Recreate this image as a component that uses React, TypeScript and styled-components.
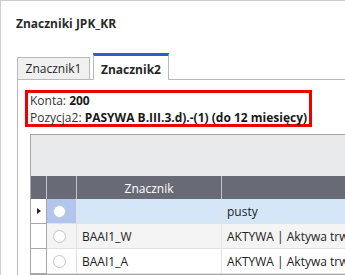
import React from 'react';
import styled, { createGlobalStyle } from 'styled-components';

const GlobalStyle = createGlobalStyle`
  html, body {
    margin: 0;
    padding: 0;
    background: #ffffff;
  }
  body {
    font-family: 'Open Sans', 'Noto Sans', 'DejaVu Sans', sans-serif;
    font-size: 12px;
    color: #1f1f1f;
  }
`;

type Row = {
  id: string;
  code: string;
  description: string;
  selected?: boolean;
  alt?: boolean;
};

const rows: Row[] = [
  { id: 'empty', code: '', description: 'pusty', selected: true },
  { id: 'w', code: 'BAAI1_W', description: 'AKTYWA | Aktywa trwałe | Wartości niematerialne i prawne', alt: true },
  { id: 'a', code: 'BAAI1_A', description: 'AKTYWA | Aktywa trwałe | Wartości niematerialne i prawne' },
];

const App = () => {
  return (
    <>
      <GlobalStyle />
      <StyledFrame>
        <StyledTitle>Znaczniki JPK_KR</StyledTitle>

        <StyledTabs>
          <StyledTab>Znacznik1</StyledTab>
          <StyledTab active>Znacznik2</StyledTab>
        </StyledTabs>

        <StyledPanel>
          <StyledInfoBox>
            <StyledInfoLine>
              Konta: <strong>200</strong>
            </StyledInfoLine>
            <StyledInfoLine>
              Pozycja2: <strong>PASYWA B.III.3.d).-(1) (do 12 miesięcy)</strong>
            </StyledInfoLine>
          </StyledInfoBox>

          <StyledGrid>
            <StyledGroupPanel />
            <StyledHeaderRow>
              <StyledHeaderCell />
              <StyledHeaderCell />
              <StyledHeaderCell>Znacznik</StyledHeaderCell>
              <StyledHeaderCell />
            </StyledHeaderRow>

            {rows.map((row) => (
              <StyledRow key={row.id}>
                <StyledIndicatorCell>{row.selected && <StyledArrow />}</StyledIndicatorCell>
                <StyledRadioCell selected={row.selected} alt={row.alt}>
                  <StyledRadio />
                </StyledRadioCell>
                <StyledCell selected={row.selected} alt={row.alt}>
                  {row.code}
                </StyledCell>
                <StyledCell selected={row.selected} alt={row.alt}>
                  {row.description}
                </StyledCell>
              </StyledRow>
            ))}
          </StyledGrid>
        </StyledPanel>
      </StyledFrame>
    </>
  );
};

const StyledFrame = styled.div`
  width: 345px;
  height: 275px;
  box-sizing: border-box;
  border-left: 1px solid #cdcdcd;
  border-top: 1px solid #cdcdcd;
  overflow: hidden;
  background: #ffffff;
`;

const StyledTitle = styled.div`
  padding: 15px 0 0 15px;
  font-weight: 700;
  line-height: 16px;
  color: #2b2b2b;
`;

const StyledTabs = styled.div`
  display: flex;
  align-items: flex-end;
  gap: 3px;
  height: 26px;
  margin-top: 21px;
  padding-left: 16px;
`;

const StyledTab = styled.div<{ active?: boolean }>`
  position: relative;
  z-index: 1;
  display: flex;
  align-items: center;
  justify-content: center;
  box-sizing: border-box;
  width: ${(p) => (p.active ? '76px' : '73px')};
  height: ${(p) => (p.active ? '27px' : '22px')};
  margin-bottom: ${(p) => (p.active ? '-1px' : '0')};
  padding-top: ${(p) => (p.active ? '2px' : '0')};
  border: 1px solid #b9b9b9;
  border-bottom: none;
  border-top: ${(p) => (p.active ? '3px solid #2b5ec9' : '1px solid #b9b9b9')};
  background: ${(p) => (p.active ? '#ffffff' : '#f0f0f0')};
  font-weight: ${(p) => (p.active ? 700 : 400)};
  color: #262626;
`;

const StyledPanel = styled.div`
  margin-left: 16px;
  padding: 10px 0 0 7px;
  border-left: 1px solid #b9b9b9;
  border-top: 1px solid #b9b9b9;
`;

const StyledInfoBox = styled.div`
  box-sizing: border-box;
  width: 287px;
  height: 37px;
  padding-left: 2px;
  border: 3px solid #ee0000;
  overflow: visible;

  strong {
    font-weight: 700;
    color: #1a1a1a;
  }
`;

const StyledInfoLine = styled.div`
  line-height: 17px;
  margin-top: -1px;
  white-space: nowrap;
  color: #333333;

  & + & {
    margin-top: 0;
  }
`;

const StyledGrid = styled.div`
  width: 420px;
  margin: 7px 0 0 5px;
  border: 1px solid #a8a8a8;
  border-right: none;
`;

const StyledGroupPanel = styled.div`
  height: 41px;
  background: #e9eaec;
`;

const StyledHeaderRow = styled.div`
  display: grid;
  grid-template-columns: 16px 30px 145px 1fr;
  height: 23px;
  background: #686b75;
`;

const StyledHeaderCell = styled.div`
  display: flex;
  align-items: center;
  justify-content: center;
  box-sizing: border-box;
  padding-top: 2px;
  border-right: 1px solid #c3c4c9;
  color: #ffffff;
`;

const StyledRow = styled.div`
  display: grid;
  grid-template-columns: 16px 30px 145px 1fr;
  height: 25px;
`;

const StyledIndicatorCell = styled.div`
  display: flex;
  align-items: center;
  box-sizing: border-box;
  padding-left: 6px;
  border-right: 1px solid #a8a8a8;
  border-bottom: 1px solid #a8a8a8;
  background: #ffffff;
`;

const StyledArrow = styled.span`
  width: 0;
  height: 0;
  border-left: 4px solid #202020;
  border-top: 3px solid transparent;
  border-bottom: 3px solid transparent;
`;

const cellBackground = (p: { selected?: boolean; alt?: boolean }) =>
  p.selected ? '#d4e6f8' : p.alt ? '#f4f4f4' : '#ffffff';

const StyledRadioCell = styled.div<{ selected?: boolean; alt?: boolean }>`
  display: flex;
  align-items: center;
  box-sizing: border-box;
  padding-left: 6px;
  border-right: 1px solid #e2e2e2;
  border-bottom: 1px solid #e2e2e2;
  background: ${(p) => (p.selected ? '#b1c5ed' : cellBackground(p))};
`;

const StyledRadio = styled.span`
  box-sizing: border-box;
  width: 13px;
  height: 13px;
  border: 1px solid #c6c6c6;
  border-radius: 50%;
  background: #ffffff;
`;

const StyledCell = styled.div<{ selected?: boolean; alt?: boolean }>`
  display: flex;
  align-items: center;
  box-sizing: border-box;
  padding: 1px 0 0 5px;
  border-right: 1px solid #e2e2e2;
  border-bottom: 1px solid #e2e2e2;
  background: ${cellBackground};
  white-space: nowrap;
  overflow: hidden;
  color: #222222;
`;

export default App;
